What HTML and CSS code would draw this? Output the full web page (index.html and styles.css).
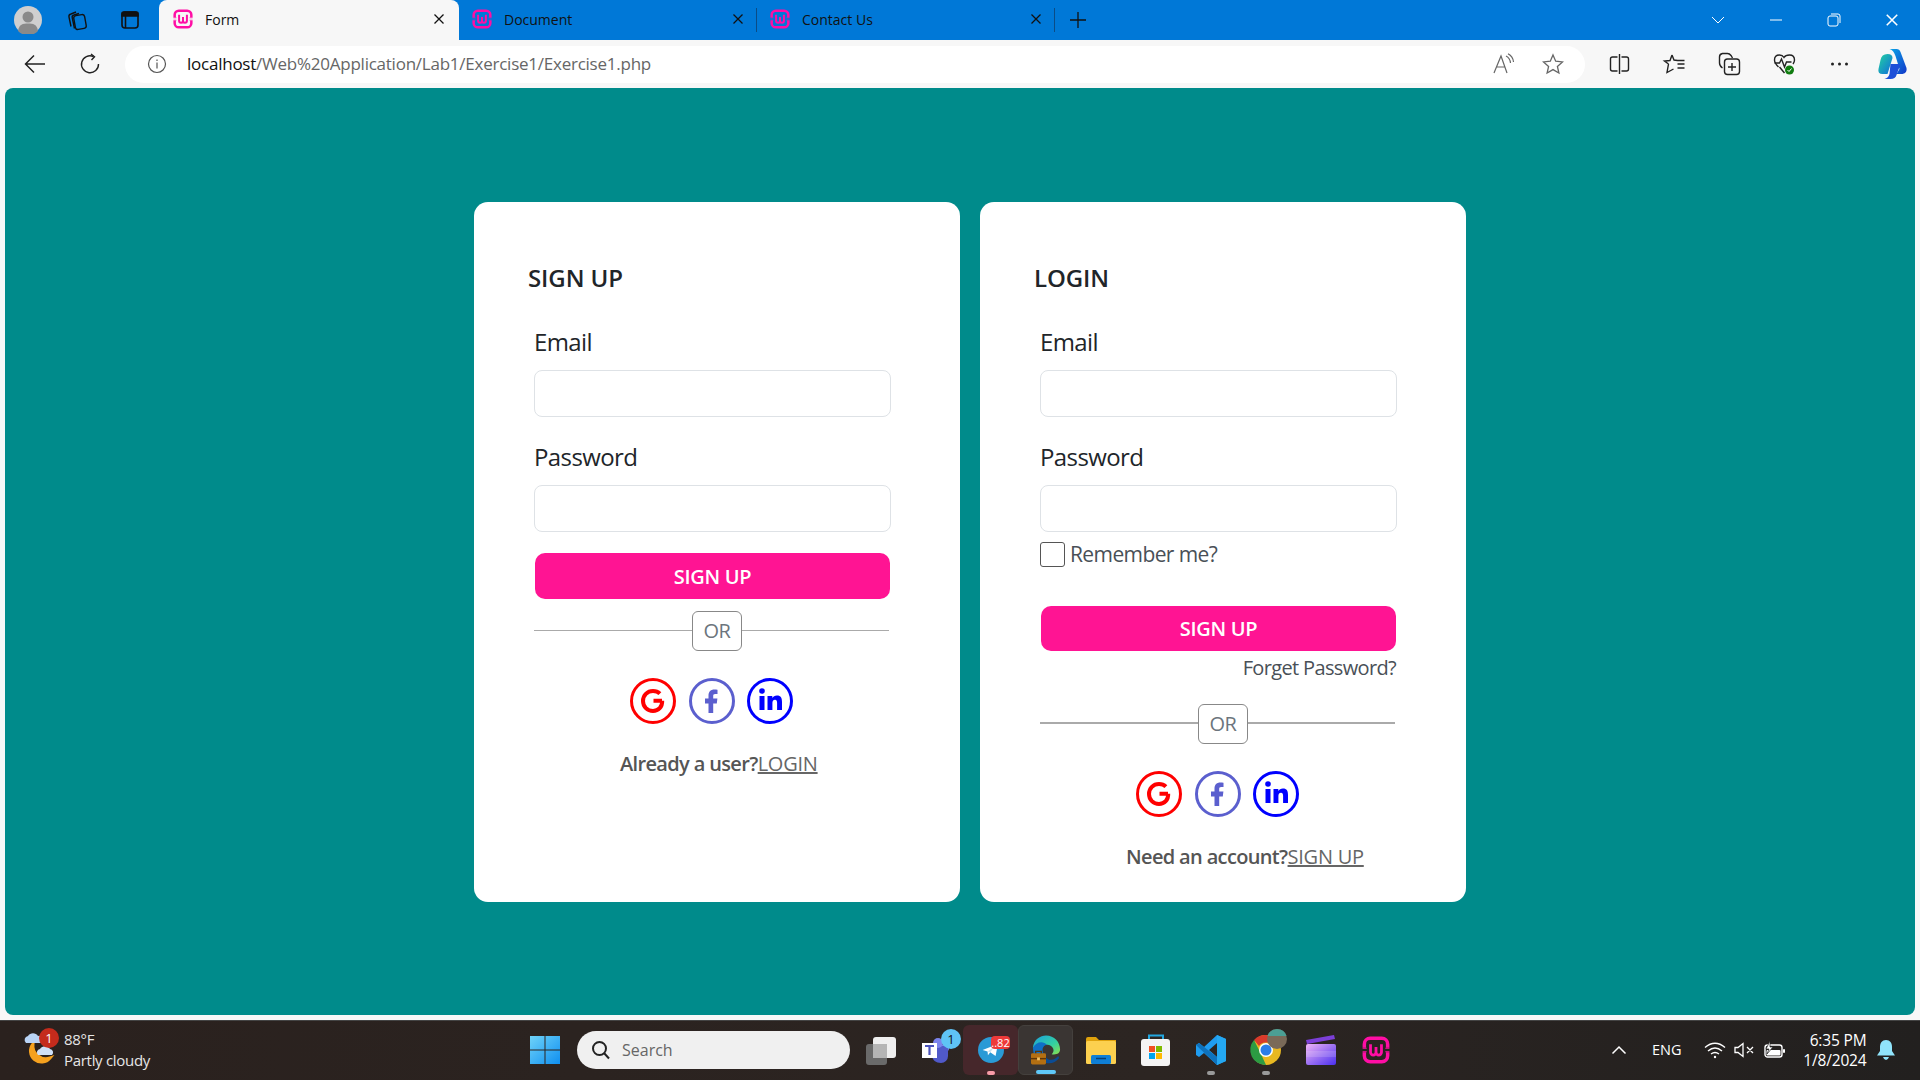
FILE: index.html
```html
<!DOCTYPE html>
<html lang="en">
<head>
    <meta charset="UTF-8">
    <meta name="viewport" content="width=device-width, initial-scale=1.0">
    <title>Form</title>
    <link rel="stylesheet" href="styles.css">
</head>
<body>
    <svg class="defs" width="0" height="0">
        <symbol id="wamp" viewBox="0 0 24 24">
            <path d="M2 10 V7 a5 5 0 0 1 5-5 h10 a5 5 0 0 1 5 5 v3 M2 14 v3 a5 5 0 0 0 5 5 h10 a5 5 0 0 0 5-5 v-3" fill="none" stroke="currentColor" stroke-width="3"/>
            <path d="M0.500 10.500 H4 M20 10.500 H23.500 M0.500 13.500 H4 M20 13.500 H23.500" fill="none" stroke="currentColor" stroke-width="1"/>
            <path d="M7.300 7 V14 a2.350 2.350 0 0 0 4.700 0 V9.500 V14 a2.350 2.350 0 0 0 4.700 0 V7" fill="none" stroke="currentColor" stroke-width="2.400"/>
        </symbol>
        <symbol id="x-mark" viewBox="0 0 12 12">
            <path d="M1.500 1.500 L10.500 10.500 M10.500 1.500 L1.500 10.500" fill="none" stroke="currentColor" stroke-width="1.300"/>
        </symbol>
        <symbol id="google" viewBox="0 0 46 46">
            <circle cx="23" cy="23" r="21.500" fill="none" stroke="currentColor" stroke-width="3"/>
            <path d="M32 22.800 H23.500 M32.200 22.800 C32.400 29 28.500 33 23 33 C17.300 33 13 28.600 13 23 C13 17.400 17.300 13 23 13 C25.900 13 28.200 14 29.900 15.700" fill="none" stroke="currentColor" stroke-width="4"/>
        </symbol>
        <symbol id="facebook" viewBox="0 0 46 46">
            <circle cx="23" cy="23" r="21.500" fill="none" stroke="currentColor" stroke-width="3"/>
            <path d="M19.500 35 V25.500 H16 V20.500 H19.500 V17.500 C19.500 13.500 22 11.500 25.200 11.500 C26.800 11.500 28 11.600 28.500 11.700 V16 H26.300 C24.500 16 24.200 16.900 24.200 18.100 V20.500 H28.400 L27.800 25.500 H24.200 V35 Z" fill="currentColor"/>
        </symbol>
        <symbol id="linkedin" viewBox="0 0 46 46">
            <circle cx="23" cy="23" r="21.500" fill="none" stroke="currentColor" stroke-width="3"/>
            <circle cx="15" cy="13" r="2.800" fill="currentColor"/>
            <path d="M12.500 18 H17.500 V32 H12.500 Z M20.500 18 H25.300 V20.100 C26.200 18.700 27.800 17.600 29.900 17.600 C34 17.600 35 20.300 35 24 V32 H30.100 V25 C30.100 23.200 29.700 21.800 28 21.800 C26.100 21.800 25.400 23.200 25.400 25 V32 H20.500 Z" fill="currentColor"/>
        </symbol>
    </svg>

    <header class="tabbar">
        <div class="tabbar-tools">
            <svg class="avatar" width="28" height="28" viewBox="0 0 28 28">
                <circle cx="14" cy="14" r="14" fill="#cfcfcf"/>
                <circle cx="14" cy="11" r="5.500" fill="#8a8a8a"/>
                <path d="M4 25 C5 18 9 17.500 14 17.500 C19 17.500 23 18 24 25 A14 14 0 0 1 4 25 Z" fill="#8a8a8a"/>
            </svg>
            <svg class="tool-icon" width="22" height="22" viewBox="0 0 22 22" fill="none" stroke="#111" stroke-width="1.400">
                <rect x="8.500" y="6" width="11" height="14" rx="2.500" transform="rotate(-10 14 13)"/>
                <path d="M5 17.500 L3 8 Q2.500 5.500 5 5 L10 3 M8.500 19.500 L6.200 8.500 Q5.800 6.500 8 6 L13 4.500"/>
            </svg>
            <svg class="tool-icon" width="20" height="20" viewBox="0 0 20 20" fill="none" stroke="#111" stroke-width="1.600">
                <rect x="2" y="2" width="16" height="16" rx="3"/>
                <path d="M2 3.500 Q2 2 4 2 H16 Q18 2 18 3.500 V6 H2 Z" fill="#111"/>
                <path d="M5.500 6 V18"/>
            </svg>
        </div>
        <div class="tab tab-active">
            <svg class="tab-icon"><use href="#wamp"/></svg>
            <span class="tab-title">Form</span>
            <svg class="tab-close"><use href="#x-mark"/></svg>
        </div>
        <div class="tab">
            <svg class="tab-icon"><use href="#wamp"/></svg>
            <span class="tab-title">Document</span>
            <svg class="tab-close"><use href="#x-mark"/></svg>
        </div>
        <div class="tab">
            <svg class="tab-icon"><use href="#wamp"/></svg>
            <span class="tab-title">Contact Us</span>
            <svg class="tab-close"><use href="#x-mark"/></svg>
        </div>
        <svg class="new-tab" width="16" height="16" viewBox="0 0 16 16"><path d="M8 0 V16 M0 8 H16" stroke="#111" stroke-width="1.300"/></svg>
        <div class="window-controls">
            <svg width="14" height="8" viewBox="0 0 14 8"><path d="M1 1 L7 7 L13 1" fill="none" stroke="#fff"/></svg>
            <svg width="14" height="14" viewBox="0 0 14 14"><path d="M1 7 H13" stroke="#fff"/></svg>
            <svg width="14" height="14" viewBox="0 0 14 14" fill="none" stroke="#fff"><rect x="1" y="3" width="10" height="10" rx="2"/><path d="M4 1 H11 Q13 1 13 3 V10"/></svg>
            <svg width="14" height="14" viewBox="0 0 12 12"><use href="#x-mark" color="#fff"/></svg>
        </div>
    </header>

    <nav class="toolbar">
        <svg class="nav-btn" width="22" height="20" viewBox="0 0 22 20" fill="none" stroke="#222" stroke-width="1.500"><path d="M21 10 H2 M10 1.500 L1.500 10 L10 18.500"/></svg>
        <svg class="nav-btn" width="20" height="22" viewBox="0 0 20 22" fill="none" stroke="#222" stroke-width="1.400"><path d="M13.500 3.500 A8.500 8.500 0 1 0 18.500 11"/><path d="M11 1 L14.500 3.800 L11.500 7"/></svg>
        <div class="address">
            <svg width="20" height="20" viewBox="0 0 20 20" fill="none" stroke="#555" stroke-width="1.200"><circle cx="10" cy="10" r="8.500"/><path d="M10 8.500 V14.500 M10 5.500 V7"/></svg>
            <span class="url"><b>localhost</b>/Web%20Application/Lab1/Exercise1/Exercise1.php</span>
            <svg class="addr-read" width="24" height="22" viewBox="0 0 24 22" fill="none" stroke="#666" stroke-width="1.200"><path d="M2 20 L9 3 L15 20 M4.500 14 H12.500"/><path d="M14 3 Q18 5 18.500 10 M16 0.800 Q21 3.500 21.500 9"/></svg>
            <svg class="addr-star" width="22" height="22" viewBox="0 0 22 22" fill="none" stroke="#666" stroke-width="1.300"><path d="M11 2 L13.700 8.200 L20.500 8.900 L15.400 13.400 L16.900 20 L11 16.600 L5.100 20 L6.600 13.400 L1.500 8.900 L8.300 8.200 Z"/></svg>
        </div>
        <div class="toolbar-icons">
            <svg width="20" height="22" viewBox="0 0 20 22" fill="none" stroke="#222" stroke-width="1.400"><path d="M10 1 V21"/><path d="M8 4 H3 Q1 4 1 6 V16 Q1 18 3 18 H8 M12 4 H17 Q19 4 19 6 V16 Q19 18 17 18 H12"/></svg>
            <svg width="22" height="22" viewBox="0 0 22 22" fill="none" stroke="#222" stroke-width="1.400"><path d="M8.500 2 L10.500 7 L14 7.500 M5 11 L1 8 L6.500 7.500 L8.500 2 M5 11 L3.500 19.500 L10 16 M14 11 H21 M14 15 H21 M13 7.500 H21"/></svg>
            <svg width="22" height="24" viewBox="0 0 22 24" fill="none" stroke="#222" stroke-width="1.400"><path d="M4 16 Q1 14 1 11 V5 Q1 2 4 1.500 H9 Q11 1.500 12.500 3.500 L14 6"/><rect x="6" y="7" width="15" height="15.500" rx="3"/><path d="M13.500 11 V19 M9.500 15 H17.500"/></svg>
            <svg width="24" height="24" viewBox="0 0 24 24"><path d="M6 15 Q2 11 2 8 Q2 3 7 3 Q10 3 11.500 5.500 Q13 3 17 3 Q22 3 22 8 Q22 10 20.500 12" fill="none" stroke="#222" stroke-width="1.400"/><path d="M2 11 H7 L9 7 L12 15 L14 10 H19 M7 15 L12 21" fill="none" stroke="#222" stroke-width="1.400"/><circle cx="17" cy="18" r="4.500" fill="#107c10"/><path d="M15 18 L16.500 19.500 L19 16.500" fill="none" stroke="#fff"/></svg>
            <svg width="18" height="4" viewBox="0 0 18 4" fill="#222"><circle cx="2" cy="2" r="1.500"/><circle cx="9" cy="2" r="1.500"/><circle cx="16" cy="2" r="1.500"/></svg>
            <svg class="copilot" width="30" height="32" viewBox="0 0 30 32">
                <defs>
                    <linearGradient id="cop-a" x1="0" y1="0" x2="1" y2="1"><stop offset="0" stop-color="#22d3a0"/><stop offset="1" stop-color="#0f6cdc"/></linearGradient>
                    <linearGradient id="cop-b" x1="0" y1="0" x2="1" y2="1"><stop offset="0" stop-color="#0aa5e8"/><stop offset="1" stop-color="#1237c8"/></linearGradient>
                </defs>
                <path d="M12 1 H19 Q22 1 23 4 L29 20 Q30 25 25 26 H19 L22 21 L18 8 Q16 2 12 1 Z" fill="url(#cop-b)"/>
                <path d="M10 6 Q4 6 3 12 L1 21 Q0 26 5 26 H10 L15 10 Q15 6 10 6 Z" fill="url(#cop-a)"/>
                <path d="M13 16 H23 L19 27 Q18 31 13 31 H7 Q11 30 12 26 Z" fill="#1d4fd8"/>
            </svg>
        </div>
    </nav>

    <main class="page">
        <div class="wrapper">
            <section class="card">
                <h2>SIGN UP</h2>
                <form class="form">
                    <label for="su-email">Email</label>
                    <input type="text" id="su-email">
                    <label for="su-password" class="label-next">Password</label>
                    <input type="password" id="su-password">
                    <button type="button" class="submit">SIGN UP</button>
                </form>
                <div class="divider">
                    <span class="divider-line"></span>
                    <span class="divider-text">OR</span>
                    <span class="divider-line"></span>
                </div>
                <div class="socials">
                    <svg class="social social-g"><use href="#google"/></svg>
                    <svg class="social social-f"><use href="#facebook"/></svg>
                    <svg class="social social-in"><use href="#linkedin"/></svg>
                </div>
                <p class="switch">Already a user?<a href="#">LOGIN</a></p>
            </section>

            <section class="card">
                <h2>LOGIN</h2>
                <form class="form">
                    <label for="li-email">Email</label>
                    <input type="text" id="li-email">
                    <label for="li-password" class="label-next">Password</label>
                    <input type="password" id="li-password">
                    <div class="remember">
                        <span class="checkbox"></span>
                        <span>Remember me?</span>
                    </div>
                    <button type="button" class="submit submit-login">SIGN UP</button>
                    <a class="forget">Forget Password?</a>
                </form>
                <div class="divider divider-login">
                    <span class="divider-line"></span>
                    <span class="divider-text">OR</span>
                    <span class="divider-line"></span>
                </div>
                <div class="socials">
                    <svg class="social social-g"><use href="#google"/></svg>
                    <svg class="social social-f"><use href="#facebook"/></svg>
                    <svg class="social social-in"><use href="#linkedin"/></svg>
                </div>
                <p class="switch">Need an account?<a href="#">SIGN UP</a></p>
            </section>
        </div>
    </main>

    <footer class="taskbar">
        <div class="weather">
            <svg width="34" height="36" viewBox="0 0 34 36">
                <path d="M9 16 A11 11 0 0 0 26 30 A13 13 0 0 1 9 16 Z" fill="#f5a11f" stroke="#f5a11f" stroke-width="3"/>
                <path d="M2 15 a4 4 0 0 1 2-7 a6 6 0 0 1 10 0 a3.500 3.500 0 0 1 2 7 Z" fill="#b9d3f5"/>
                <path d="M14 27 a3.500 3.500 0 0 1 2-6 a6 6 0 0 1 10 0 a3.500 3.500 0 0 1 2 6 Z" fill="#cfe0f7"/>
            </svg>
            <span class="weather-badge">1</span>
            <div class="weather-text">
                <span>88°F</span>
                <span>Partly cloudy</span>
            </div>
        </div>
        <div class="start">
            <svg width="30" height="30" viewBox="0 0 30 30">
                <defs><linearGradient id="win" x1="0" y1="0" x2="1" y2="1"><stop offset="0" stop-color="#6fd3f8"/><stop offset="1" stop-color="#0f8ff0"/></linearGradient></defs>
                <path d="M0 1 H14.500 V14.500 H0 Z M15.500 1 H30 V14.500 H15.500 Z M0 15.500 H14.500 V29 H0 Z M15.500 15.500 H30 V29 H15.500 Z" fill="url(#win)"/>
            </svg>
        </div>
        <div class="search">
            <svg width="20" height="20" viewBox="0 0 20 20" fill="none" stroke="#222" stroke-width="2"><circle cx="8.500" cy="8.500" r="6.500"/><path d="M13 13 L18 18.500"/></svg>
            <span>Search</span>
        </div>
        <div class="tasks">
            <div class="task">
                <svg width="30" height="30" viewBox="0 0 30 30"><rect x="0" y="9" width="21" height="21" rx="3" fill="#6a6a6a"/><rect x="7" y="2" width="23" height="21" rx="3" fill="#efefef"/><rect x="7" y="9" width="14" height="14" fill="#b5b5b5"/></svg>
            </div>
            <div class="task">
                <svg width="32" height="32" viewBox="0 0 32 32"><circle cx="25" cy="14" r="4" fill="#7b83eb"/><path d="M12 12 H28 V22 A7 7 0 0 1 21 29 Q13 29 12 22 Z" fill="#5059c9"/><circle cx="18" cy="9" r="5" fill="#7b83eb"/><rect x="2" y="9" width="15" height="15" fill="#fff"/><path d="M5 12 H14 M9.500 12 V21" stroke="#4b53bc" stroke-width="2.200"/></svg>
                <span class="task-badge teams-badge">1</span>
            </div>
            <div class="task task-telegram">
                <svg width="26" height="26" viewBox="0 0 34 34"><circle cx="17" cy="17" r="17" fill="#2a9ad6"/><path d="M6 17 L26 9 L23 25 L16 20 L13 24 L12.500 19 Z" fill="#fff"/><path d="M12.500 19 L22 12 L16 20" fill="#c9dfee"/></svg>
                <span class="task-badge telegram-badge">..82</span>
                <span class="task-dot dot-pink"></span>
            </div>
            <div class="task task-edge">
                <svg width="30" height="31" viewBox="0 0 32 32">
                    <defs><linearGradient id="edge" x1="0" y1="0" x2="1" y2="1"><stop offset="0" stop-color="#1aa0e0"/><stop offset="0.600" stop-color="#33d0a0"/><stop offset="1" stop-color="#8ee04c"/></linearGradient></defs>
                    <path d="M2 14 C3 5 10 1 16 1 C25 1 31 8 31 16 C31 20 27 22 22 21 C26 18 24 12 18 11 C10 10 6 14 2 14 Z" fill="url(#edge)"/>
                    <path d="M2 14 C5 8 13 6 17 11 C12 12 11 17 14 22 L3 22 Z" fill="#0f6fc6"/>
                    <path d="M14 22 C18 29 25 28 29 23 L30 25 C26 31 18 32 14 29 Z" fill="#0b4c94"/>
                    <rect x="0" y="20" width="16" height="12" rx="1.500" fill="#b46f12"/>
                    <rect x="0" y="25" width="16" height="1.500" fill="#5e3607"/>
                    <rect x="6.500" y="24.500" width="3" height="3" fill="#f2c063"/>
                    <path d="M5 20 V18 H11 V20" fill="none" stroke="#5e3607" stroke-width="1.500"/>
                </svg>
                <span class="task-dot dot-blue"></span>
            </div>
            <div class="task">
                <svg width="30" height="28" viewBox="0 0 30 28"><path d="M0 3 Q0 1 2 1 H10 L13 4 H30 V10 H0 Z" fill="#e0a20c"/><rect x="0" y="5" width="30" height="23" rx="1.500" fill="#fcd04f"/><rect x="5" y="19" width="20" height="9" rx="1.500" fill="#0f7fd6"/><path d="M10 22.500 H20" stroke="#073f75" stroke-width="1.500"/></svg>
            </div>
            <div class="task">
                <svg width="30" height="32" viewBox="0 0 30 32"><path d="M8 6 V1.500 H22 V6" fill="none" stroke="#22a7e0" stroke-width="2"/><rect x="0" y="5" width="29" height="27" rx="3" fill="#f4f4f4"/><rect x="8" y="12" width="6" height="6" fill="#f25022"/><rect x="15" y="12" width="6" height="6" fill="#7fba00"/><rect x="8" y="19" width="6" height="6" fill="#00a4ef"/><rect x="15" y="19" width="6" height="6" fill="#ffb900"/></svg>
            </div>
            <div class="task">
                <svg width="30" height="30" viewBox="0 0 30 30"><path d="M21 0 L30 4 V26 L21 30 L8 18 L3 22 L0 20 V10 L3 8 L8 12 Z M21 8 L13 15 L21 22 Z" fill="#1f9cf0" fill-rule="evenodd"/><path d="M21 0 L30 4 V26 L21 30 Z" fill="#24a8f2"/><path d="M0 10 L3 8 L21 22 V30 Z" fill="#0e72bd"/></svg>
                <span class="task-dot dot-gray"></span>
            </div>
            <div class="task">
                <svg width="42" height="42" viewBox="-6 -2 42 42">
                    <circle cx="15" cy="19" r="15" fill="#e8b821"/>
                    <path d="M15 4 A15 15 0 0 1 28 11.500 H15 A7.500 7.500 0 0 0 8 15 L3 9 A15 15 0 0 1 15 4 Z" fill="#d93a2b"/>
                    <path d="M3 9 L9 21 L15 33.900 A15 15 0 0 1 3 9 Z" fill="#2c9b43"/>
                    <circle cx="15" cy="19" r="7" fill="#fff"/><circle cx="15" cy="19" r="5.500" fill="#2b7de9"/>
                    <circle cx="26" cy="8" r="10" fill="#7a6a58"/><path d="M16.500 5 A10 10 0 0 1 35.500 5 Z" fill="#4b9f94"/>
                </svg>
                <span class="task-dot dot-gray"></span>
            </div>
            <div class="task">
                <svg width="30" height="30" viewBox="0 0 30 30">
                    <defs><linearGradient id="clip" x1="0" y1="0" x2="1" y2="1"><stop offset="0" stop-color="#f0b4f6"/><stop offset="1" stop-color="#4a2ff0"/></linearGradient></defs>
                    <path d="M0 5 L28 0 L29 4 L1 9 Z" fill="#7c3fd8"/>
                    <rect x="0" y="9" width="30" height="21" rx="2" fill="url(#clip)"/>
                    <path d="M0 19 H30" stroke="#fff" stroke-opacity="0.150" stroke-width="6"/>
                </svg>
            </div>
            <div class="task task-wamp">
                <svg width="28" height="28"><use href="#wamp"/></svg>
            </div>
        </div>
        <div class="tray">
            <svg class="tray-chevron" width="16" height="10" viewBox="0 0 16 10"><path d="M1.500 8.500 L8 2 L14.500 8.500" fill="none" stroke="#fff" stroke-width="1.500"/></svg>
            <span class="tray-lang">ENG</span>
            <svg class="tray-wifi" width="22" height="18" viewBox="0 0 22 18" fill="none" stroke="#fff" stroke-width="1.400"><path d="M1 6.500 Q11 -2 21 6.500 M4 10 Q11 4 18 10 M7 13 Q11 10 15 13"/><circle cx="11" cy="16" r="1.200" fill="#fff" stroke="none"/></svg>
            <svg class="tray-sound" width="20" height="16" viewBox="0 0 20 16" fill="none" stroke="#fff" stroke-width="1.300"><path d="M1 5.500 H4 L9 1.500 V14.500 L4 10.500 H1 Z M13 5 L19 11 M19 5 L13 11"/></svg>
            <svg class="tray-battery" width="22" height="18" viewBox="0 0 22 18"><rect x="1" y="4" width="17" height="12" rx="2.500" fill="none" stroke="#fff" stroke-width="1.400"/><rect x="2.500" y="9" width="14" height="5.500" rx="1" fill="#fff"/><rect x="19" y="8" width="2" height="4" rx="1" fill="#fff"/><path d="M6 0 L2 8 H5 L3 13 L9 6 H6 Z" fill="#fff" stroke="#222" stroke-width="0.700"/></svg>
            <div class="clock">
                <span>6:35 PM</span>
                <span>1/8/2024</span>
            </div>
            <svg class="tray-bell" width="18" height="20" viewBox="0 0 18 20" fill="#90e4fb"><path d="M9 0 C13 0 15 3 15 7 V11 L18 15.500 H0 L3 11 V7 C3 3 5 0 9 0 Z"/><path d="M6 17 H12 Q11 20 9 20 Q7 20 6 17 Z"/></svg>
        </div>
    </footer>
</body>
</html>
```

FILE: styles.css
```css
* {
    box-sizing: border-box;
}
html, body {
    margin: 0;
    padding: 0;
    height: 1080px;
    overflow: hidden;
}
body {
    display: flex;
    flex-direction: column;
    background: #f7f7f7;
    font-family: "Open Sans", "Noto Sans", sans-serif;
}
.defs {
    position: absolute;
}

/* browser tab strip */
.tabbar {
    display: flex;
    align-items: center;
    height: 40px;
    background: #0078d7;
    color: #111;
    font-size: 14px;
}
.tabbar-tools {
    display: flex;
    align-items: center;
    width: 159px;
    padding-left: 14px;
}
.tool-icon {
    margin-left: 24px;
}
.tool-icon + .tool-icon {
    margin-left: 32px;
}
.tab {
    display: flex;
    align-items: center;
    width: 298px;
    height: 24px;
    padding: 0 12px 2px 13px;
    border-right: 1px solid #0b4c86;
}
.tab-active {
    width: 300px;
    height: 40px;
    border-right: 0;
    padding: 0 14px 2px 14px;
    background: #f7f7f7;
    border-radius: 8px 8px 0 0;
}
.tab-icon {
    width: 20px;
    height: 20px;
    color: #ff0ea5;
    flex: none;
}
.tab-title {
    flex: 1;
    margin-left: 12px;
}
.tab-close {
    width: 12px;
    height: 12px;
    color: #111;
    flex: none;
}
.new-tab {
    margin-left: 15px;
}
.window-controls {
    display: flex;
    align-items: center;
    margin-left: auto;
    gap: 44px;
    padding-right: 21px;
}

/* address bar row */
.toolbar {
    display: flex;
    align-items: center;
    height: 48px;
    padding-left: 24px;
    background: #f7f7f7;
}
.nav-btn + .nav-btn {
    margin-left: 34px;
}
.address {
    display: flex;
    align-items: center;
    width: 1460px;
    height: 37px;
    margin-left: 25px;
    padding: 0 21px 0 22px;
    background: #fff;
    border-radius: 19px;
    font-size: 17px;
    color: #666;
}
.url {
    flex: 1;
    margin: -2px 0 0 20px;
    letter-spacing: -0.24px;
}
.url b {
    font-weight: 400;
    color: #111;
}
.addr-star {
    margin-left: 26px;
}
.toolbar-icons {
    display: flex;
    align-items: center;
    padding-left: 7px;
}
.toolbar-icons svg {
    width: 55px;
}
.toolbar-icons .copilot {
    margin-left: -2px;
}

/* page content */
.page {
    height: 927px;
    margin: 0 5px;
    background: #008b8b;
    border-radius: 8px;
}
.wrapper {
    display: flex;
    gap: 20px;
    padding: 114px 0 0 469px;
}
.card {
    width: 486px;
    height: 700px;
    padding-top: 61px;
    background: #fff;
    border-radius: 14px;
    color: #212529;
}
.card h2 {
    margin: 0 0 0 54px;
    font-size: 24px;
    line-height: 30px;
    font-weight: 600;
    letter-spacing: -0.1px;
}
.form {
    display: flex;
    flex-direction: column;
    width: 357px;
    margin: 34px 0 0 60px;
}
.form label {
    font-size: 24px;
    line-height: 30px;
    letter-spacing: -0.6px;
}
.form .label-next {
    margin-top: 25px;
}
.form input {
    height: 47px;
    margin-top: 13px;
    border: 1px solid #dee2e6;
    border-radius: 8px;
    background: #fff;
}
.submit {
    width: 355px;
    height: 46px;
    margin: 21px 0 0 1px;
    padding: 0;
    border: none;
    border-radius: 10px;
    background: #ff1493;
    color: #fff;
    font-family: inherit;
    font-size: 20px;
    font-weight: 600;
    letter-spacing: -0.3px;
}
.submit-login {
    height: 45px;
    margin-top: 39px;
}
.remember {
    display: flex;
    align-items: center;
    gap: 5px;
    height: 25px;
    margin-top: 10px;
    font-size: 21px;
    letter-spacing: -0.6px;
    color: #495057;
}
.remember span:last-child {
    margin-top: -2px;
}
.checkbox {
    width: 25px;
    height: 25px;
    border: 1px solid #555;
    border-radius: 3px;
}
.forget {
    margin: 3px 1px 0 0;
    text-align: right;
    font-size: 20px;
    line-height: 28px;
    letter-spacing: -0.65px;
    color: #495057;
}
.divider {
    display: flex;
    width: 355px;
    margin: 12px 0 0 60px;
}
.divider-login {
    margin-top: 22px;
}
.divider-line {
    flex: 1;
    height: 1px;
    margin-top: 19px;
    background: #aaa;
}
.divider-line:first-child {
    flex: none;
    width: 158px;
}
.divider-login .divider-line {
    height: 2px;
    margin-top: 18px;
}
.divider-text {
    width: 50px;
    height: 40px;
    border: 1px solid #888;
    border-radius: 6px;
    text-align: center;
    font-size: 20px;
    line-height: 38px;
    letter-spacing: -0.4px;
    color: #6c757d;
}
.socials {
    display: flex;
    gap: 12.5px;
    margin: 27px 0 0 156px;
}
.social {
    width: 46px;
    height: 46px;
}
.social-g {
    color: #f00;
}
.social-f {
    color: #5b5fce;
}
.social-in {
    color: #00f;
}
.switch {
    margin: 25px 0 0 146px;
    font-size: 20px;
    line-height: 30px;
    font-weight: 600;
    letter-spacing: -0.65px;
    color: #555;
}
.switch a {
    font-weight: 400;
    letter-spacing: -0.25px;
    color: #666;
}

/* windows taskbar */
.taskbar {
    display: flex;
    align-items: center;
    height: 60px;
    margin-top: 5px;
    padding-bottom: 2px;
    background: linear-gradient(90deg, #2a211e 0%, #2c2522 60%, #22201f 100%);
    border-top: 1px solid #444;
    color: #fff;
}
.weather {
    position: relative;
    display: flex;
    align-items: center;
    width: 517px;
    padding-left: 24px;
}
.weather > svg {
    margin-top: -8px;
}
.weather-badge {
    position: absolute;
    left: 39px;
    top: -1px;
    width: 20px;
    height: 20px;
    border-radius: 50%;
    background: #c42b1c;
    text-align: center;
    font-size: 13px;
    line-height: 20px;
}
.weather-text {
    display: flex;
    flex-direction: column;
    margin-left: 6px;
    font-size: 15px;
    line-height: 21px;
    letter-spacing: -0.3px;
    color: #e6e6e6;
}
.start {
    display: flex;
    justify-content: center;
    width: 55px;
}
.search {
    display: flex;
    align-items: center;
    width: 273px;
    height: 38px;
    margin-left: 5px;
    padding-left: 14px;
    border-radius: 19px;
    background: #f0f0f0;
    color: #666;
    font-size: 16px;
}
.search span {
    margin-left: 11px;
}
.tasks {
    display: flex;
    margin-left: 3px;
}
.task {
    position: relative;
    display: flex;
    align-items: center;
    justify-content: center;
    width: 55px;
    height: 50px;
    border-radius: 6px;
}
.task-telegram {
    background: #46272b;
}
.task-edge {
    background: #3a3533;
    border: 1px solid #44403d;
}
.task-wamp {
    color: #ff0ea5;
}
.task-badge {
    position: absolute;
    text-align: center;
    color: #111;
    font-size: 13px;
}
.teams-badge {
    left: 33px;
    top: 4px;
    width: 20px;
    height: 20px;
    border-radius: 50%;
    background: #5fc3f5;
    line-height: 20px;
}
.telegram-badge {
    left: 28px;
    top: 11px;
    width: 19px;
    height: 13px;
    border-radius: 4px;
    background: #ee3a3a;
    color: #fff;
    font-size: 11px;
    line-height: 13px;
}
.task-dot {
    position: absolute;
    bottom: 0;
    left: 50%;
    width: 8px;
    height: 4px;
    margin-left: -4px;
    border-radius: 2px;
}
.dot-pink {
    background: #f89ca8;
}
.dot-blue {
    width: 20px;
    margin-left: -10px;
    background: #5fc8f8;
}
.dot-gray {
    background: #9a9a9a;
}
.tray {
    display: flex;
    align-items: center;
    flex: 1;
    padding-left: 208px;
    font-size: 14.500px;
}
.tray-lang {
    margin-left: 25px;
}
.tray-wifi {
    margin-left: 22px;
}
.tray-sound {
    margin-left: 8px;
}
.tray-battery {
    margin-left: 10px;
}
.clock {
    display: flex;
    flex-direction: column;
    align-items: flex-end;
    width: 75px;
    margin-left: 6px;
    font-size: 15.500px;
    line-height: 20px;
    letter-spacing: -0.15px;
}
.tray-bell {
    margin-left: 10px;
}
```
